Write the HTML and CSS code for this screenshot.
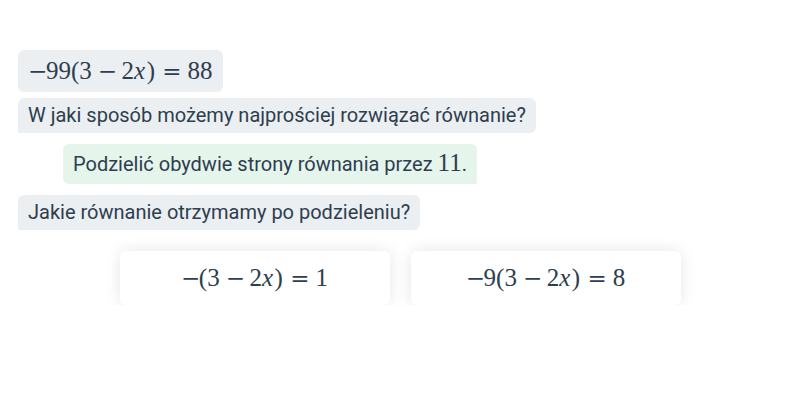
FILE: index.html
```html
<!DOCTYPE html>
<html lang="pl">
<head>
<meta charset="utf-8">
<link rel="stylesheet" href="styles.css">
</head>
<body>
<div class="chat">
  <div class="bubble q first"><span class="math"><span class="op">−</span>99(3<span class="bin">−</span>2<i>x</i>)<span class="rel">=</span>88</span></div>
  <div class="bubble q last">W jaki sposób możemy najprościej rozwiązać równanie?</div>
  <div class="bubble a">Podzielić obydwie strony równania przez <span class="math">11</span>.</div>
  <div class="bubble q single">Jakie równanie otrzymamy po podzieleniu?</div>
  <div class="choices">
    <div class="card"><span class="math"><span class="op">−</span>(3<span class="bin">−</span>2<i>x</i>)<span class="rel">=</span>1</span></div>
    <div class="card"><span class="math"><span class="op">−</span>9(3<span class="bin">−</span>2<i>x</i>)<span class="rel">=</span>8</span></div>
  </div>
</div>
</body>
</html>
```
FILE: styles.css
```css
html, body {
  margin: 0;
  padding: 0;
  background: #ffffff;
}
body {
  font-family: Roboto, "Noto Sans", sans-serif;
  color: #2d3e4f;
}
.chat {
  padding: 50px 18px 0 18px;
  display: flex;
  flex-direction: column;
  align-items: flex-start;
}
.bubble {
  font-size: 20px;
  line-height: 25px;
  height: 35px;
  box-sizing: border-box;
  padding: 5px 10px;
  border-radius: 6px;
  background: #eceff1;
  white-space: nowrap;
}
.bubble.first {
  height: 42px;
  padding: 10px 10px 7px;
  margin-bottom: 6px;
}
.bubble.last {
  border-bottom-left-radius: 0;
  margin-bottom: 11px;
}
.bubble.a {
  height: 40px;
  background: #e5f5ec;
  margin-left: 45px;
  padding: 8px 10px 7px;
  border-bottom-right-radius: 0;
  margin-bottom: 11px;
}
.bubble.single {
  border-bottom-left-radius: 0;
  margin-bottom: 21px;
}
.math {
  font-family: "Liberation Serif", "DejaVu Serif", serif;
  font-size: 25px;
  line-height: 20px;
  white-space: nowrap;
}
.math i {
  font-style: italic;
  padding-right: 0.06em;
}
.op, .bin, .rel {
  display: inline-block;
  width: 0.778em;
  text-align: center;
  font-family: "DejaVu Serif", serif;
  font-size: 0.92em;
}
.bin {
  margin: 0 0.26em;
}
.rel {
  margin: 0 0.32em;
}
.choices {
  align-self: stretch;
  margin: 0 -18px;
  display: flex;
  justify-content: center;
  gap: 21px;
}
.card {
  width: 270px;
  height: 54px;
  box-sizing: border-box;
  background: #ffffff;
  border-radius: 6px;
  box-shadow: 0 0 16px rgba(0, 0, 0, 0.1);
  display: flex;
  align-items: center;
  justify-content: center;
}
```
